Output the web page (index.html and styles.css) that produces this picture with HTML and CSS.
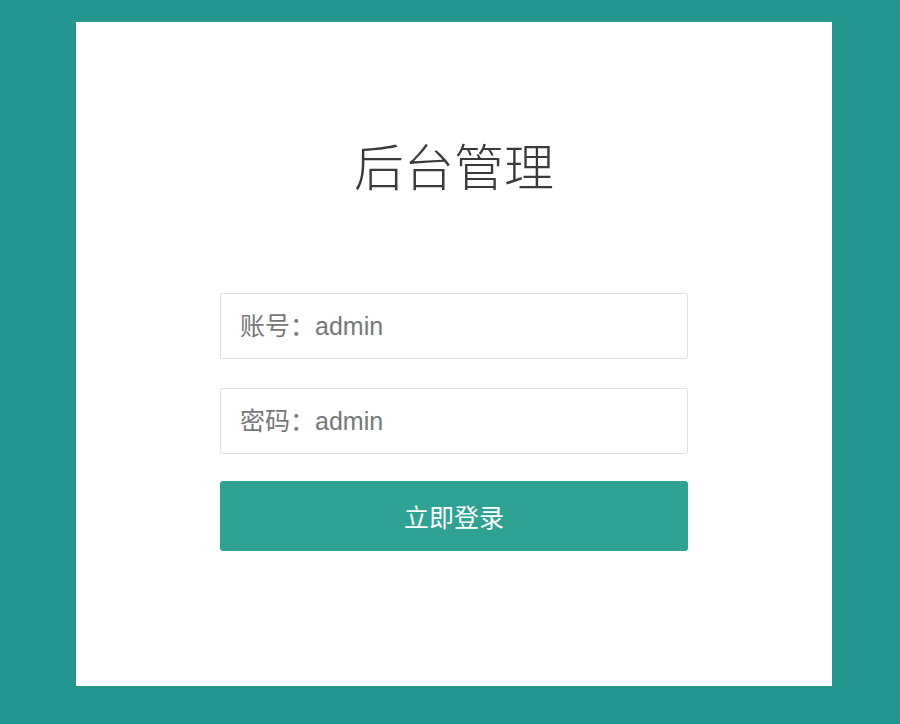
FILE: index.html
```html
<!DOCTYPE html>
<html lang="zh-CN">
<head>
    <meta charset="UTF-8">
    <meta name="viewport" content="width=device-width, initial-scale=1.0">
    <title>后台管理 - 登录</title>
    <link rel="stylesheet" href="styles.css">
</head>
<body>
    <div class="login-box">
        <h1 class="login-title">后台管理</h1>
        <form class="login-form" onsubmit="return false;">
            <input class="login-input" type="text" name="username" placeholder="账号：admin">
            <input class="login-input" type="password" name="password" placeholder="密码：admin">
            <button class="login-btn" type="submit">立即登录</button>
        </form>
    </div>
</body>
</html>
```

FILE: styles.css
```css
body {
    background: #23968f;
    margin: 0;
    padding: 22px 0 0 76px;
    font-family: "Liberation Sans", "Noto Sans CJK SC", sans-serif;
}
.login-box {
    width: 756px;
    height: 664px;
    background: #fff;
    box-sizing: border-box;
    padding-top: 111px;
}
.login-title {
    margin: 0;
    text-align: center;
    font-family: "Noto Sans CJK SC", sans-serif;
    font-size: 50px;
    font-weight: 300;
    line-height: 62px;
    color: #3a3a3a;
}
.login-form {
    width: 468px;
    margin: 98px auto 0;
    display: flex;
    flex-direction: column;
}
.login-input {
    height: 66px;
    box-sizing: border-box;
    border: 1px solid #e2e2e2;
    border-radius: 2px;
    padding: 0 19px;
    font-family: "Liberation Sans", "Noto Sans CJK SC", sans-serif;
    font-size: 25px;
    color: #555;
    margin-bottom: 29px;
    outline: none;
}
.login-input:last-of-type {
    margin-bottom: 27px;
}
.login-input::placeholder {
    color: #777;
}
.login-btn {
    height: 70px;
    border: none;
    border-radius: 3px;
    background: #2ea293;
    color: #fff;
    font-family: "Noto Sans CJK SC", sans-serif;
    font-size: 25px;
    cursor: pointer;
}
```
